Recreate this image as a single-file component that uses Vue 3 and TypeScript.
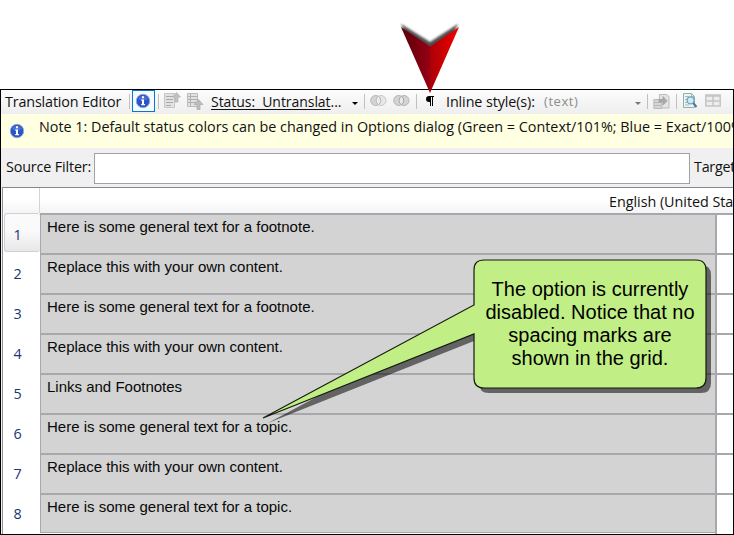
<script setup lang="ts">
interface Row { id: number; source: string }

const footnote = 'Here is some general text for a footnote.'
const content = 'Replace this with your own content.'
const topic = 'Here is some general text for a topic.'
const rows: Row[] = [footnote, content, footnote, content, 'Links and Footnotes', topic, content, topic]
  .map((source, i) => ({ id: i + 1, source }))
</script>

<template>
  <main class="page">
    <section class="editor">
      <header class="toolbar">
        <span class="title">Translation Editor</span>
        <i class="sep"></i>
        <button class="info-btn" aria-label="Notes">
          <svg width="16" height="16" viewBox="0 0 16 16"><circle cx="8" cy="8" r="6.7" fill="#2b55c4" stroke="#8da4df" /><path d="M3 6a5.4 5.4 0 0 1 10 0Q8 9 3 6Z" fill="#5b83dc" opacity=".6" /><path d="M7 3.3h2v2H7zM6.3 6.5H9V11h1v1.2H6.2V11H7V7.7h-.7z" fill="#fff" /></svg>
        </button>
        <i class="sep after-info"></i>
        <svg class="doc-up" width="17" height="17" viewBox="0 0 17 17"><path d="M.5 1.5h10v14H.5z" fill="#e2e2e2" stroke="#c6c6c6" /><path d="M2 4.5h7M2 7.5h7M2 10.5h7M2 13.5h5" stroke="#a9a9a9" /><path d="M12.5.5 16.5 5H14v5h-3V5H8.5z" fill="#c2c2c2" stroke="#b1b1b1" stroke-width=".7" /></svg>
        <svg class="doc-next" width="17" height="17" viewBox="0 0 17 17"><path d="M.5.5h10v13H.5z" fill="#e2e2e2" stroke="#bcbcbc" /><path d="M1 3.5h9M1 6.5h9M1 9.5h9M3.5 1v12" stroke="#b0b0b0" /><path d="m11.5 6.5 4.5 5h-3v5h-3v-5H7z" fill="#bdbdbd" stroke="#aaa" stroke-width=".7" /></svg>
        <span class="status"><u>Status:&nbsp; Untranslat</u>...</span>
        <i class="caret"></i>
        <i class="sep before-merge"></i>
        <svg class="rings" width="17" height="14" viewBox="0 0 17 14"><circle cx="11" cy="6.5" r="5" fill="#e7e7e7" stroke="#c9c9c9" /><circle cx="5.7" cy="6.5" r="5" fill="#d3d3d3" stroke="#b5b5b5" /><path d="M8.4 2.3a5 5 0 0 1 0 8.4 5 5 0 0 1 0-8.4Z" fill="#eee" stroke="#bababa" /></svg>
        <svg class="rings second" width="17" height="14" viewBox="0 0 17 14"><circle cx="11" cy="6.5" r="5" fill="#d4d4d4" stroke="#b3b3b3" /><circle cx="5.7" cy="6.5" r="5" fill="#d4d4d4" stroke="#b3b3b3" /><path d="M8.4 2.3a5 5 0 0 1 0 8.4 5 5 0 0 1 0-8.4Z" fill="#eaeaea" stroke="#a8a8a8" /></svg>
        <i class="sep before-mark"></i>
        <svg class="pilcrow" width="9" height="11" viewBox="0 0 9 11"><path d="M3.2 0H8v1H7v9H6V1H5v9H4V6H3Q0 5.8 0 3T3.2 0Z" fill="#000" /></svg>
        <span class="inline-label">Inline style(s):</span>
        <span class="inline-value">(text)</span>
        <i class="caret muted"></i>
        <i class="sep before-copy"></i>
        <svg class="copy" width="17" height="17" viewBox="0 0 17 17"><path d="M6.5 1.5h7l2.5 2V15H6.5z" fill="#e4e4e4" stroke="#bbb" /><path d="M.8 6.5h8v9h-8z" fill="#d4d4d4" stroke="#bcbcbc" /><path d="M1 9.5h8M1 12.5h8" stroke="#bbb" /><path d="M6 6.5h4v-3L14.2 8 10 12V9H6z" fill="#aaa" stroke="#999" stroke-width=".6" /></svg>
        <i class="sep before-preview"></i>
        <svg class="preview" width="16" height="17" viewBox="0 0 16 17"><path d="M1.5 1.5h8l3 3v11h-11z" fill="#edf4f2" stroke="#92afa9" /><path d="M9.5 1.5v3h3M3 4.5h4M3 7.5h3M3 10.5h3M3 13h4" fill="none" stroke="#9ebdb8" /><circle cx="8.6" cy="8.3" r="3.5" fill="#cceafa" stroke="#75a1b8" stroke-width="1.3" /><path d="m11.2 11 3.3 4" stroke="#477b9f" stroke-width="2" /></svg>
        <svg class="table" width="16" height="14" viewBox="0 0 16 14"><path d="M.8 1h14.4v11H.8z" fill="#ededed" stroke="#c3c3c3" stroke-width="1.4" /><path d="M1 2h14M8 2v10M1 7h14" stroke="#c3c3c3" stroke-width="1.4" /></svg>
      </header>

      <div class="note">
        <svg class="note-icon" width="16" height="16" viewBox="0 0 16 16"><circle cx="8" cy="8" r="6.7" fill="#2b55c4" stroke="#8da4df" /><path d="M3 6a5.4 5.4 0 0 1 10 0Q8 9 3 6Z" fill="#5b83dc" opacity=".6" /><path d="M7 3.3h2v2H7zM6.3 6.5H9V11h1v1.2H6.2V11H7V7.7h-.7z" fill="#fff" /></svg>
        <span class="note-text">Note 1: Default status colors can be changed in Options dialog (Green = Context/101%; Blue = Exact/100%</span>
      </div>

      <div class="filters">
        <label for="source-filter">Source Filter:</label>
        <input id="source-filter" type="text" />
        <span class="target">Target</span>
      </div>

      <div class="grid">
        <div class="grid-head">
          <div class="corner"></div>
          <div class="language">English (United Sta</div>
        </div>
        <div v-for="row in rows" :key="row.id" class="row" :class="{ current: row.id === 1 }">
          <div class="number">{{ row.id }}</div>
          <div class="source">{{ row.source }}</div>
          <div class="translation"></div>
        </div>
      </div>
    </section>

    <svg class="pointer" width="68" height="80" viewBox="0 0 68 80">
      <defs>
        <linearGradient id="dark-red" x1="0" x2="1"><stop stop-color="#58000b" /><stop offset="1" stop-color="#970013" /></linearGradient>
        <linearGradient id="bright-red" x1="0" x2="1"><stop stop-color="#a90009" /><stop offset=".6" stop-color="#d70000" /><stop offset="1" stop-color="#f00000" /></linearGradient>
        <filter id="soft" x="-20%" y="-20%" width="140%" height="140%"><feGaussianBlur stdDeviation="1" /></filter>
      </defs>
      <path d="M5 8 34 26 62 8 34 70Z" fill="#222" fill-opacity=".8" filter="url(#soft)" />
      <path d="M5 11 34 30.5V77Z" fill="url(#dark-red)" />
      <path d="M63 11 34 30.5V77Z" fill="url(#bright-red)" />
    </svg>

    <aside class="callout">
      <svg class="bubble" width="452" height="175" viewBox="0 0 452 175">
        <path transform="translate(5 5)" d="M222 10H434Q444 10 444 20V128Q444 138 434 138H222Q212 138 212 128V84L1 168 212 55V20Q212 10 222 10Z" fill="#000" fill-opacity=".53" />
        <path d="M222 10H434Q444 10 444 20V128Q444 138 434 138H222Q212 138 212 128V84L1 168 212 55V20Q212 10 222 10Z" fill="#c2ef85" stroke="#141c0c" stroke-width="1.2" />
      </svg>
      <p class="message">The option is currently<br />disabled. Notice that no<br />spacing marks are<br />shown in the grid.</p>
    </aside>
  </main>
</template>

<style>
body { margin: 0; background: #fff; }
</style>

<style scoped>
* { box-sizing: border-box; }
.page { position: relative; width: 734px; height: 535px; padding-top: 89px; overflow: hidden; background: #fff; font-family: "Open Sans", "Noto Sans", sans-serif; font-size: 14.35px; color: #111; }
.editor { height: 446px; border: 1px solid #000; overflow: hidden; background: #f0f0f0; }
.toolbar { display: flex; align-items: flex-start; height: 24px; background: linear-gradient(#fcfcfc, #eee); white-space: nowrap; }
.toolbar > * { flex: none; }
.title { width: 124px; padding-left: 4px; line-height: 24px; letter-spacing: -.15px; }
.sep { width: 1px; height: 15px; margin: 4px 0 0 4px; background: #c1c1c1; }
.info-btn { display: grid; place-items: center; width: 23px; height: 22px; margin: 0 0 0 2px; padding: 0 2px 0 0; border: 1px solid #0078d7; background: #f7f9fb; }
.after-info { margin-left: 3px; }
.doc-up { margin: 2px 0 0 5px; }
.doc-next { margin: 3px 0 0 6px; }
.status { width: 137px; margin-left: 7px; line-height: 23px; font-size: 14px; letter-spacing: -.05px; }
.status u { text-underline-offset: 2px; text-decoration-skip-ink: none; }
.caret { width: 0; height: 0; margin: 12px 0 0 4px; border: 3px solid transparent; border-top-color: #000; border-bottom: 0; }
.before-merge { margin-left: 6px; }
.rings { margin: 4px 0 0 5px; }
.rings.second { margin-left: 6px; }
.before-mark { margin-left: 6px; }
.pilcrow { margin: 6px 0 0 9px; }
.inline-label { width: 90px; margin-left: 11px; line-height: 23px; letter-spacing: -.1px; }
.inline-value { width: 38px; margin-left: 8px; color: #8c8c8c; line-height: 23px; font-size: 13px; letter-spacing: .55px; }
.caret.muted { margin-left: 53px; border-top-color: #777; }
.before-copy { margin-left: 6px; }
.copy { margin: 3px 0 0 5px; }
.before-preview { margin-left: 6px; }
.preview { margin: 2px 0 0 5px; }
.table { margin: 4px 0 0 7px; }
.note { display: flex; height: 34px; padding-left: 8px; background: #ffffe1; white-space: nowrap; }
.note-icon { flex: none; margin-top: 9px; }
.note-text { flex: none; margin-left: 14px; line-height: 26px; }
.filters { display: flex; height: 39px; padding: 5px 0 3px 5px; white-space: nowrap; }
.filters label { flex: none; width: 88px; line-height: 27px; letter-spacing: -.15px; }
.filters input { flex: none; width: 596px; height: 31px; margin: 0; border: 1px solid #a0a0aa; background: #fff; }
.target { margin-left: 4px; line-height: 27px; letter-spacing: -.25px; }
.grid { height: 348px; margin-left: 1px; border-top: 1px solid #828790; border-left: 1px solid #929299; background: #fff; }
.grid-head { display: flex; height: 25px; background: linear-gradient(#fff 45%, #f3f4f5); white-space: nowrap; }
.corner { flex: none; width: 37px; border-right: 1px solid #d4d4d6; }
.language { margin-left: 569px; line-height: 28px; letter-spacing: -.03px; }
.row { display: flex; height: 40px; }
.number { flex: none; display: flex; justify-content: center; width: 37px; padding: 11px 8px 0 0; line-height: 20px; color: #203477; }
.current .number { margin-left: 1px; width: 36px; padding-right: 10px; height: 39px; border: 1px solid #d0d0d0; border-right: 0; border-radius: 3px; background: linear-gradient(#fafafa 45%, #e7e7e9); }
.source { flex: none; width: 675px; padding: 1px 0 0 6px; border: solid #a7a7ac; border-width: 2px 0 0 1px; background: #d3d3d3; color: #080808; font-family: "Liberation Sans", sans-serif; font-size: 15px; line-height: 22px; }
.translation { flex: 1; border: solid #a7a7ac; border-width: 2px 0 0 2px; background: #fff; }
.row:last-child { height: 41px; }
.row:last-child .source { height: 40px; border-bottom-width: 1px; }
.pointer { position: absolute; left: 396px; top: 16px; }
.callout { position: absolute; left: 262px; top: 250px; width: 452px; height: 175px; color: #000; }
.bubble { position: absolute; inset: 0; }
.message { position: absolute; left: 212px; top: 28px; width: 232px; margin: 0; text-align: center; font: 20px/23px "Liberation Sans", sans-serif; white-space: nowrap; }
</style>
